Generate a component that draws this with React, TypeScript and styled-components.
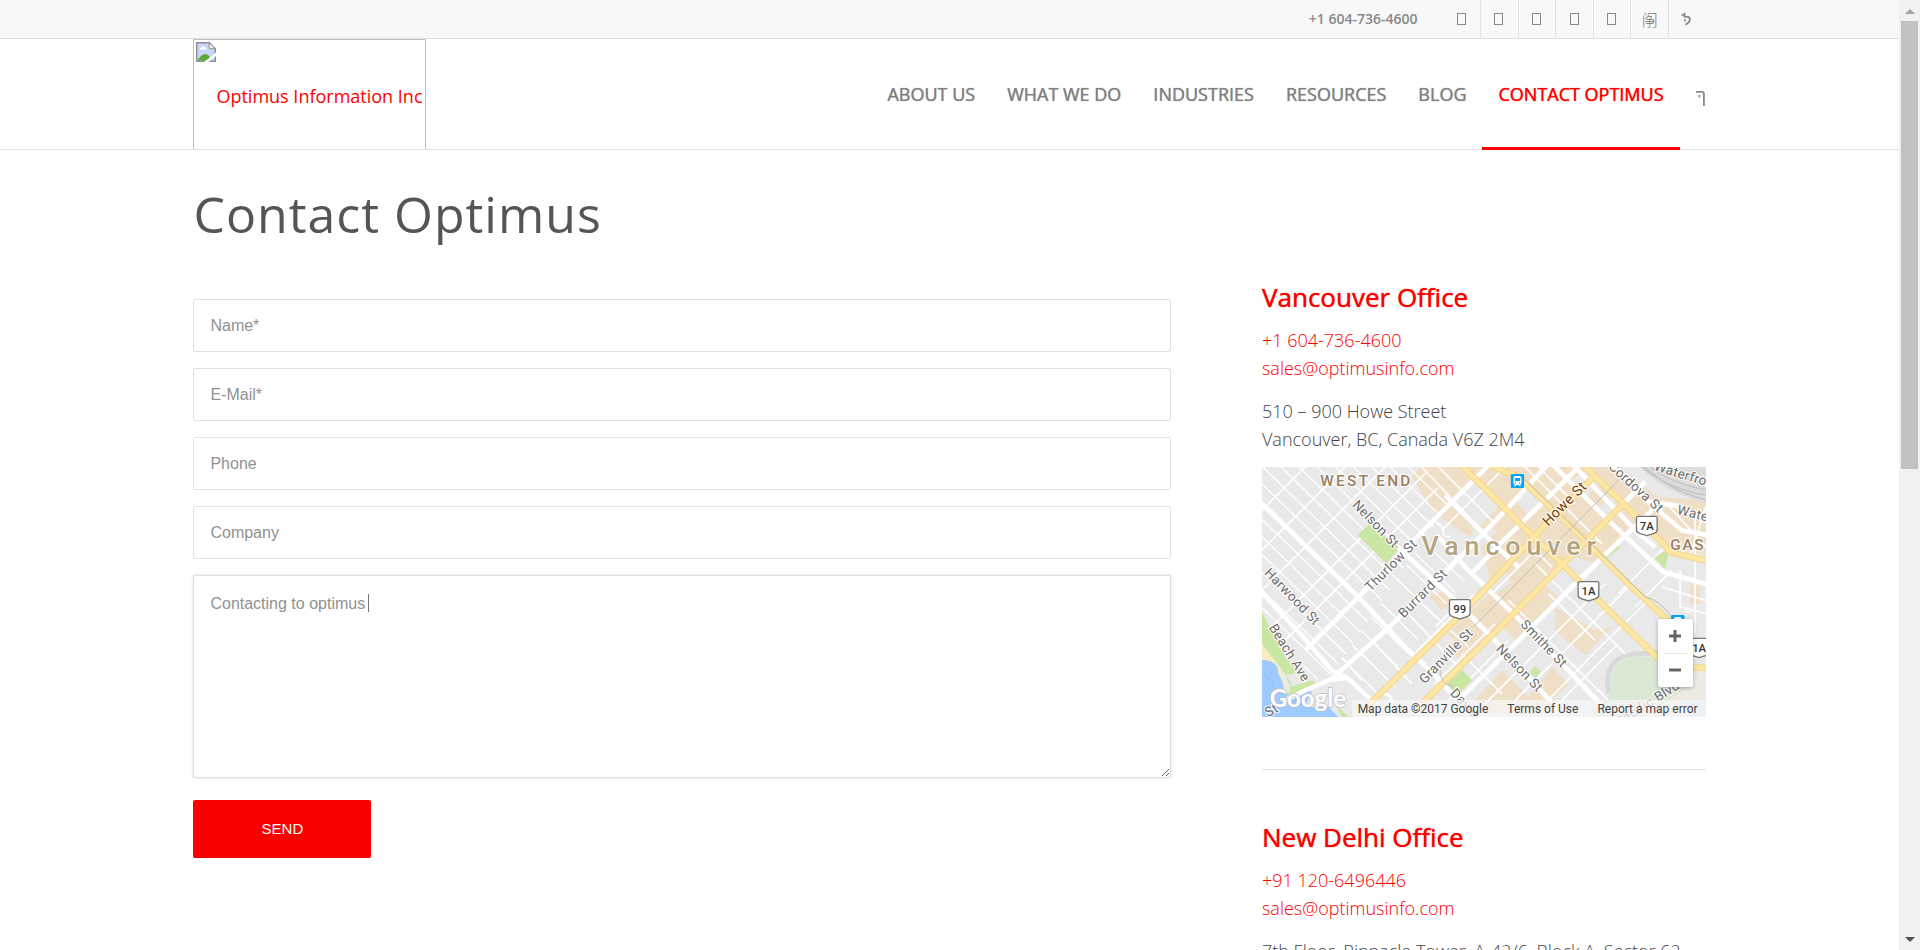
import React, { useState } from "react";
import styled, { createGlobalStyle } from "styled-components";

const red = "#fc0000";
const line = "#e1e1e1";
const sans = `"Open Sans", "Noto Sans", sans-serif`;
const arial = `"Liberation Sans", Arial, sans-serif`;

const GlobalStyle = createGlobalStyle`
  *, *::before, *::after { box-sizing: border-box; }
  body { margin: 0; background: #fff; color: #444; font: 300 18px/28px ${sans}; }
  a { color: inherit; text-decoration: none; }
  h1, h2, p, ul { margin: 0; padding: 0; }
  ul { list-style: none; }
`;

const Viewport = styled.div`
  display: flex;
  height: 100vh;
`;

const Page = styled.div`
  flex: 1;
  min-width: 0;
  overflow-y: auto;
  scrollbar-width: none;
`;

const Container = styled.div`
  width: 85%;
  margin: 0 auto;
  padding: 0 51px;
`;

const TopBar = styled.div`
  background: #f8f8f8;
  border-bottom: 1px solid ${line};
`;

const TopRow = styled(Container)`
  display: flex;
  justify-content: flex-end;
  align-items: center;
  height: 38px;
`;

const TopPhone = styled.span`
  color: #888;
  font-size: 14px;
  font-weight: 600;
  margin-right: 26px;
`;

const SocialList = styled.ul`
  display: flex;
  width: 262px;
  height: 38px;
`;

const SocialItem = styled.li`
  flex: 1;
  display: flex;
  border-right: 1px solid ${line};
  &:last-child { border-right: 0; }
`;

const SocialLink = styled.a`
  flex: 1;
  display: flex;
  align-items: center;
  justify-content: center;
  color: #777;
  font: 300 16px/20px "Noto Sans CJK SC", sans-serif;
`;

const Header = styled.header`
  border-bottom: 1px solid ${line};
`;

const HeaderRow = styled(Container)`
  display: flex;
  justify-content: space-between;
  height: 110px;
`;

const Logo = styled.a`
  display: flex;
  width: 233px;
  padding: 2px 1px 0 2px;
  border: 1px solid #bfbfbf;
  border-bottom: 0;
  color: ${red};
  font-weight: 400;
  line-height: 108px;
  white-space: nowrap;
`;

const NavList = styled.ul`
  display: flex;
  height: 111px;
`;

const NavLink = styled.a<{ $active?: boolean }>`
  display: block;
  height: 111px;
  padding: 0 16px;
  border-bottom: 3px solid ${(p) => (p.$active ? red : "transparent")};
  color: ${(p) => (p.$active ? red : "#808080")};
  font-weight: 400;
  line-height: 111px;
  text-shadow: 0 0 1px currentColor;
  white-space: nowrap;
`;

const SearchLink = styled.a`
  display: flex;
  align-items: center;
  height: 111px;
  padding: 8px 0 0 16px;
  color: #888;
`;

const Main = styled.main`
  padding: 30px 0 50px;
`;

const Title = styled.h1`
  margin-bottom: 32px;
  color: #555;
  font-size: 50px;
  font-weight: 400;
  line-height: 68px;
  letter-spacing: 1px;
`;

const Columns = styled.div`
  display: grid;
  grid-template-columns: repeat(3, minmax(0, 1fr));
  column-gap: 6%;
  align-items: start;
`;

const Form = styled.form`
  grid-column: span 2;
  display: flex;
  flex-direction: column;
  align-items: flex-start;
  gap: 16px;
  padding-top: 19px;
`;

const Field = styled.input`
  width: 100%;
  height: 53px;
  padding: 0 16px;
  border: 1px solid ${line};
  border-radius: 2px;
  outline: 0;
  color: #919191;
  font: 16px/20px ${arial};
  &::placeholder { color: #919191; opacity: 1; }
`;

const MessageBox = styled.div`
  position: relative;
  width: 100%;
`;

const Message = styled.textarea`
  display: block;
  width: 100%;
  height: 203px;
  padding: 15px 16px;
  border: 1px solid ${line};
  border-radius: 2px;
  outline: 0;
  box-shadow: 0 0 2px 1px rgba(0, 0, 0, 0.08);
  resize: vertical;
  color: #919191;
  font: 16px/26px ${arial};
`;

const Caret = styled.span`
  position: absolute;
  top: 19px;
  left: 175px;
  width: 1px;
  height: 18px;
  background: #777;
`;

const Send = styled.button`
  width: 178px;
  height: 58px;
  margin-top: 6px;
  border: 0;
  border-bottom: 1px solid #e30000;
  border-radius: 2px;
  background: ${red};
  color: #fff;
  font: 15px/20px ${arial};
`;

const Office = styled.section`
  & + & {
    margin-top: 52px;
    padding-top: 50px;
    border-top: 1px solid ${line};
  }
`;

const OfficeName = styled.h2`
  margin-bottom: 12px;
  color: ${red};
  font-size: 26px;
  font-weight: 400;
  line-height: 34px;
  text-shadow: 0 0 1px currentColor;
`;

const OfficeText = styled.p<{ $accent?: boolean }>`
  margin-bottom: ${(p) => (p.$accent ? 15 : 14)}px;
  color: ${(p) => (p.$accent ? red : "#444")};
  & > a { display: block; }
`;

const MapFrame = styled.div`
  position: relative;
  height: 250px;
  overflow: hidden;
  & > svg { display: block; width: 100%; height: 100%; }
`;

const MapCredits = styled.div`
  position: absolute;
  right: 0;
  bottom: 0;
  display: flex;
  gap: 19px;
  padding: 2px 8px 0 6px;
  background: rgba(245, 245, 245, 0.75);
  color: #444;
  font: 12px/15px Roboto, sans-serif;
  white-space: nowrap;
`;

const ZoomPanel = styled.div`
  position: absolute;
  right: 13px;
  bottom: 30px;
  display: flex;
  flex-direction: column;
  width: 35px;
  border-radius: 2px;
  background: #fff;
  box-shadow: 0 1px 4px rgba(0, 0, 0, 0.3);
`;

const ZoomButton = styled.button`
  display: flex;
  align-items: center;
  justify-content: center;
  height: 34px;
  padding: 0;
  border: 0;
  background: none;
`;

const ZoomRule = styled.div`
  height: 1px;
  margin: 0 6px -1px;
  background: #e6e6e6;
`;

const ScrollTrack = styled.div`
  display: flex;
  flex-direction: column;
  align-items: center;
  width: 21px;
  padding: 9px 0 8px;
  background: #f1f1f1;
`;

const ScrollThumb = styled.div`
  width: 17px;
  height: 48%;
  margin: 7px 0 auto;
  background: #c1c1c1;
`;

const BoxGlyph = () => (
  <svg width="10" height="14" viewBox="0 0 10 14" fill="none" stroke="#888">
    <rect x="0.5" y="1.5" width="8" height="11" />
  </svg>
);

const HookGlyph = () => (
  <svg width="12" height="15" viewBox="0 0 12 15" fill="none" stroke="#888" strokeWidth="1.8">
    <path d="M0.500 2.800h3M3.500 0.800v4h3.500Q8.800 5 8.800 7.400T4.500 12.800M4 7.200v2.200" />
  </svg>
);

const SearchGlyph = () => (
  <svg width="10" height="17" viewBox="0 0 10 17" fill="none" stroke="#888" strokeWidth="1.8">
    <path d="M0 1.900h5.600Q7.900 2 7.900 4v12M3.400 5v2.400" />
  </svg>
);

const BrokenImage = () => (
  <svg width="20" height="20" viewBox="0 0 20 20">
    <path d="M.7.7h12.6l6 6v12.6H.7z" fill="#c6d6f4" stroke="#8d8d8d" strokeWidth="1.4" />
    <path d="M13.2.7v6h6z" fill="#fff" stroke="#8d8d8d" />
    <path d="M3.5 7.5q.4-2 2.2-2 1.300-2.400 3.200-.2 1.800 0 1.500 2.200z" fill="#fff" />
    <path d="M1.500 18.600q3.500-6.600 8-6.600 3.600 0 6 6.600z" fill="#58ab35" />
    <path d="M8.200 20 20 10.400V14l-7.200 6z" fill="#fff" />
  </svg>
);

type Pt = [number, number];
const path = (pts: Pt[]) => "M" + pts.map((p) => p.join(" ")).join("L");

const highways: Pt[][] = [
  [[300, 735], [345, 690], [590, 450], [700, 335], [815, 210], [1000, 25]],
  [[470, 720], [690, 505], [905, 290], [1085, 110]],
  [[600, -5], [770, 165], [905, 295], [1050, 440], [1190, 575], [1240, 600], [1340, 603]],
  [[690, -5], [730, 15], [765, 25], [930, 180], [1010, 260], [1120, 370], [1230, 470]],
  [[965, -5], [1085, 110], [1190, 215], [1225, 255], [1340, 283]],
];

const streets: Pt[][] = [
  [[130, 550], [290, 390], [450, 225], [570, 105], [690, -15]],
  [[210, 635], [375, 487], [510, 355], [640, 225], [750, 110], [860, -10]],
  [[465, 560], [640, 385]],
  [[630, 320], [700, 245], [880, 70], [950, 0]],
  [[590, 700], [770, 520], [960, 330], [1160, 140], [1190, 110]],
  [[1085, 110], [1150, 45]],
  [[-10, 100], [290, 390], [430, 540], [545, 650], [620, 740]],
  [[-10, 365], [120, 505], [210, 610], [260, 635], [350, 720]],
  [[70, 700], [130, 670], [205, 638], [260, 632]],
  [[410, 240], [440, 270], [560, 380], [690, 510], [900, 740]],
  [[530, 210], [620, 310], [760, 445], [900, 590], [1020, 715]],
  [[550, 85], [700, 235], [770, 300]],
  [[870, -10], [1050, 170], [1205, 315], [1340, 353]],
  [[930, -10], [1130, 200], [1180, 240]],
  [[1050, -10], [1160, 105], [1260, 190], [1340, 205]],
  [[1165, 105], [1240, 115], [1340, 165]],
];

const lanes: Pt[][] = [
  [[520, 650], [700, 470]], [[560, 700], [740, 520]], [[520, 480], [570, 430]],
  [[640, 740], [850, 530], [1030, 350]], [[720, 740], [930, 530], [1110, 350]],
  [[820, 740], [1010, 545], [1150, 410]], [[880, 720], [1070, 530]],
  [[600, 560], [720, 680]], [[740, 400], [860, 520], [1040, 700]], [[820, 290], [960, 430], [1090, 560]],
  [[690, 380], [820, 250], [870, 300]], [[860, 380], [1000, 520]],
  [[540, 190], [700, 30], [730, 0]], [[480, 0], [660, 190]], [[530, 0], [700, 170]],
  [[700, 90], [800, 190]], [[790, 0], [1020, 230]], [[830, 0], [940, 110]],
  [[960, 340], [1110, 190]], [[1070, 380], [1210, 240]], [[1120, 420], [1230, 310]],
  [[1280, 280], [1332, 120]], [[1215, 110], [1332, 240]], [[1255, 310], [1255, 420], [1332, 440]],
  [[1300, 140], [1300, 500]], [[1200, 360], [1332, 400]], [[240, 570], [300, 640]],
  [[430, 430], [580, 590]], [[470, 400], [620, 540]], [[330, 520], [450, 650]], [[300, 560], [400, 660]],
];

const downtown: Pt[][] = [
  [[450, 30], [480, -5], [680, -5], [560, 110], [640, 180], [625, 210], [520, 140]],
  [[650, 180], [770, 60], [860, -5], [1060, -5], [1190, 90], [1332, 100], [1332, 265], [1210, 240], [1130, 160], [1000, 290], [940, 270], [600, 550], [560, 500], [690, 370], [660, 240], [710, 190]],
  [[640, -5], [850, -5], [720, 120], [650, 60]],
  [[500, 385], [560, 370], [580, 400], [540, 430]],
  [[580, 560], [820, 330], [900, 400], [760, 520], [720, 480], [600, 590]],
  [[880, 420], [1000, 490], [1050, 480], [970, 565], [880, 490]],
  [[640, 700], [720, 610], [800, 690], [870, 600], [920, 650], [830, 740], [660, 740]],
  [[1285, 355], [1315, 355], [1315, 410], [1285, 410]],
];

const grey: Pt[][] = [
  [[760, 100], [800, 70], [840, 110], [800, 145]],
  [[930, 40], [970, 10], [1010, 50], [975, 90]],
  [[690, 350], [730, 320], [750, 345], [705, 380]],
  [[1010, 120], [1050, 90], [1080, 130], [1030, 180]],
];

const greens: Pt[][] = [
  [[322, 172], [412, 240], [375, 290], [288, 205]],
  [[1062, 230], [1075, 243], [1036, 272], [1027, 265]],
  [[1222, 245], [1210, 306], [1177, 272]],
  [[600, 608], [632, 640], [588, 682], [555, 652]],
  [[818, 598], [838, 612], [822, 632], [803, 618]],
  [[0, 435], [50, 530], [80, 580], [110, 615], [72, 625], [85, 660], [150, 640], [172, 655], [75, 692], [90, 650], [55, 600], [0, 530]],
  [[222, 715], [262, 750], [240, 750]],
];

interface MapLabel { x: number; y: number; r: number; t: string; s?: number; c?: string; w?: number; ls?: number }
const labels: MapLabel[] = [
  { x: 314, y: 57, r: 0, t: "WEST END", s: 46, c: "#9a8062", w: 500, ls: 7 },
  { x: 750, y: 265, r: 0, t: "Vancouver", s: 80, c: "#b3a582", w: 500, ls: 18 },
  { x: 1278, y: 248, r: 0, t: "GAS", s: 46, c: "#9a8062", w: 500, ls: 5 },
  { x: 337, y: 176, r: 46, t: "Nelson St" },
  { x: 393, y: 300, r: -45, t: "Thurlow St" },
  { x: 488, y: 384, r: -45, t: "Burrard St" },
  { x: 86, y: 394, r: 46, t: "Harwood St" },
  { x: 77, y: 561, r: 58, t: "Beach Ave" },
  { x: 558, y: 572, r: -46, t: "Granville St" },
  { x: 768, y: 608, r: 46, t: "Nelson St" },
  { x: 841, y: 535, r: 46, t: "Smithe St" },
  { x: 914, y: 116, r: -45, t: "Howe St", s: 43, c: "#7a4010" },
  { x: 1118, y: 66, r: 42, t: "Cordova St" },
  { x: 1299, y: 148, r: 14, t: "Water" },
  { x: 1290, y: 38, r: 17, t: "Waterfront R" },
  { x: 603, y: 713, r: 46, t: "Davie" },
  { x: 1160, y: 716, r: -32, t: "Pacific Blvd" },
  { x: 32, y: 736, r: -28, t: "St" },
];

const Shield = ({ x, y, t }: { x: number; y: number; t: string }) => (
  <g transform={`translate(${x} ${y})`}>
    <path d="M-26-28H26Q32-28 31-20V12Q31 20 22 23L0 30L-22 23Q-31 20-31 12V-20Q-31-28-26-28Z" fill="#fff" stroke="#777" strokeWidth="4" />
    <text y="12" fontSize="34" fontWeight="500" fill="#333" textAnchor="middle">{t}</text>
  </g>
);

const Station = ({ x, y }: { x: number; y: number }) => (
  <g transform={`translate(${x} ${y})`}>
    <rect width="40" height="42" rx="4" fill="#00a5f5" />
    <path d="M8 12q0-6 6-6h12q6 0 6 6v16q0 4-5 4l4 5h-5l-4-5h-4l-4 5H9l4-5q-5 0-5-4z" fill="#fff" />
    <path d="M12 12h16v9H12z" fill="#00a5f5" />
    <circle cx="14" cy="27" r="2" fill="#00a5f5" />
    <circle cx="26" cy="27" r="2" fill="#00a5f5" />
  </g>
);

const CityMap = () => (
  <svg viewBox="0 0 1332 750" preserveAspectRatio="xMidYMid slice" fontFamily="Roboto, sans-serif" role="img" aria-label="Map">
    <defs>
      <clipPath id="westEnd">
        <path d="M0 0H480L560 110L205 630L160 640L0 440Z" />
      </clipPath>
      <clipPath id="south">
        <path d="M205 630L560 110L690 240L330 700L280 700Z" />
      </clipPath>
    </defs>
    <rect width="1332" height="750" fill="#e9e9e9" />
    {downtown.map((p, i) => <path key={i} d={path(p) + "Z"} fill="#f0dfc7" />)}
    {grey.map((p, i) => <path key={i} d={path(p) + "Z"} fill="#e9e9e9" />)}
    <path d="M1130-5Q1200 70 1332 110V-5Z" fill="#dcdcdc" />
    <path d="M1140 0Q1220 65 1332 85M1165 0Q1230 50 1332 68M1195 0Q1250 35 1332 50M1150 0Q1230 75 1332 98" fill="none" stroke="#c4c4c4" strokeWidth="4" />
    <path d="M1190 600H1332V750H1150Z" fill="#eeebe4" />
    <path d="M1275 700H1332V750H1275Z" fill="#cfe0fb" />
    <path d="M1040 680Q1020 560 1140 560H1200" fill="none" stroke="#d9d9d9" strokeWidth="14" />
    <path d="M985 750L1045 680Q1040 570 1130 570H1190V640L1290 650L1150 750Z" fill="#dae8d3" />
    <g fill="none" stroke="#fff" strokeLinejoin="round">
      <g clipPath="url(#westEnd)" strokeWidth="4">
        {Array.from({ length: 20 }, (_, i) => {
          const d = -480 + i * 53;
          return <path key={i} d={`M0 ${d}L700 ${d + 680}`} />;
        })}
        {[130, 250, 370, 510, 590].map((d) => (
          <path key={d} d={`M0 ${d}L600 ${d - 600}`} strokeWidth="5" />
        ))}
      </g>
      <g clipPath="url(#south)" strokeWidth="4">
        {[-250, -190, -130, -60, 60, 130, 200, 270, 340].map((d) => (
          <path key={d} d={`M0 ${d}L800 ${d + 780}`} />
        ))}
      </g>
      {lanes.map((p, i) => <path key={i} d={path(p)} strokeWidth="5" />)}
    </g>
    <path d="M0 520L55 605L80 690L0 750Z" fill="#f7ecc4" />
    <path d="M0 578Q50 580 50 620Q68 650 68 680L150 672L130 720H200L230 750H0Z" fill="#9ecbff" />
    <path d="M0 620l30 20 15 40M40 600l-20 30M90 690l40 30" stroke="#8bbbf0" strokeWidth="2" fill="none" />
    {greens.map((p, i) => <path key={i} d={path(p) + "Z"} fill="#c9e6a2" />)}
    <g fill="none" stroke="#fff" strokeLinejoin="round">
      {streets.map((p, i) => <path key={i} d={path(p)} strokeWidth="14" />)}
      <path d="M522 165Q550 180 545 205Q560 215 570 205" strokeWidth="5" />
    </g>
    <circle cx="368" cy="702" r="22" fill="none" stroke="#fff" strokeWidth="9" />
    <circle cx="1279" cy="430" r="7" fill="none" stroke="#fff" strokeWidth="4" />
    <g fill="none" strokeLinejoin="round">
      {highways.map((p, i) => <path key={i} d={path(p)} stroke="#f3d890" strokeWidth="20" />)}
      {highways.map((p, i) => <path key={i} d={path(p)} stroke="#fee6a4" strokeWidth="13" />)}
      <path d="M635 480L1085 25M790 40L930 175L1150 390Q1190 395 1230 450M535 600Q530 650 575 660" stroke="#bdbdbd" strokeWidth="3" />
    </g>
    {labels.map((l, i) => (
      <text
        key={i}
        transform={`translate(${l.x} ${l.y}) rotate(${l.r})`}
        y={l.r ? 6 : 0}
        textAnchor="middle"
        fontSize={l.s ?? 40}
        fontWeight={l.w ?? 400}
        letterSpacing={l.ls ?? 1}
        fill={l.c ?? "#6b6b6b"}
        stroke="#fff"
        strokeOpacity="0.8"
        strokeWidth="7"
        paintOrder="stroke"
      >
        {l.t}
      </text>
    ))}
    <Shield x={594} y={426} t="99" />
    <Shield x={980} y={372} t="1A" />
    <Shield x={1155} y={176} t="7A" />
    <Shield x={1312} y={542} t="1A" />
    <Station x={747} y={21} />
    <Station x={1228} y={444} />
    <text x="24" y="720" fontFamily="Lato, sans-serif" fontSize="72" fontWeight="700" fill="#fff" stroke="#bdbdbd" strokeWidth="4" paintOrder="stroke">Google</text>
  </svg>
);

const navItems = ["ABOUT US", "WHAT WE DO", "INDUSTRIES", "RESOURCES", "BLOG", "CONTACT OPTIMUS"];

const social = [
  { name: "LinkedIn", icon: <BoxGlyph /> },
  { name: "Twitter", icon: <BoxGlyph /> },
  { name: "Facebook", icon: <BoxGlyph /> },
  { name: "Google Plus", icon: <BoxGlyph /> },
  { name: "YouTube", icon: <BoxGlyph /> },
  { name: "RSS", icon: "䦶" },
  { name: "Mail", icon: <HookGlyph /> },
];

export default function App() {
  const [message, setMessage] = useState("Contacting to optimus");
  return (
    <Viewport>
      <GlobalStyle />
      <Page>
        <TopBar>
          <TopRow>
            <TopPhone>+1 604-736-4600</TopPhone>
            <SocialList>
              {social.map((s) => (
                <SocialItem key={s.name}>
                  <SocialLink href="#" aria-label={s.name}>{s.icon}</SocialLink>
                </SocialItem>
              ))}
            </SocialList>
          </TopRow>
        </TopBar>
        <Header>
          <HeaderRow>
            <Logo href="#">
              <BrokenImage />
              <span>Optimus Information Inc</span>
            </Logo>
            <nav>
              <NavList>
                {navItems.map((n) => (
                  <li key={n}>
                    <NavLink href="#" $active={n === "CONTACT OPTIMUS"}>{n}</NavLink>
                  </li>
                ))}
                <li>
                  <SearchLink href="#" aria-label="Search"><SearchGlyph /></SearchLink>
                </li>
              </NavList>
            </nav>
          </HeaderRow>
        </Header>
        <Main>
          <Container>
            <Title>Contact Optimus</Title>
            <Columns>
              <Form onSubmit={(e) => e.preventDefault()}>
                <Field aria-label="Name" placeholder="Name*" />
                <Field aria-label="E-Mail" type="email" placeholder="E-Mail*" />
                <Field aria-label="Phone" type="tel" placeholder="Phone" />
                <Field aria-label="Company" placeholder="Company" />
                <MessageBox>
                  <Message aria-label="Message" value={message} onChange={(e) => setMessage(e.target.value)} />
                  <Caret />
                </MessageBox>
                <Send type="submit">SEND</Send>
              </Form>
              <aside>
                <Office>
                  <OfficeName>Vancouver Office</OfficeName>
                  <OfficeText $accent>
                    <a href="tel:+16047364600">+1 604-736-4600</a>
                    <a href="mailto:sales@optimusinfo.com">sales@optimusinfo.com</a>
                  </OfficeText>
                  <OfficeText>
                    510 – 900 Howe Street
                    <br />
                    Vancouver, BC, Canada V6Z 2M4
                  </OfficeText>
                  <MapFrame>
                    <CityMap />
                    <ZoomPanel>
                      <ZoomButton aria-label="Zoom in">
                        <svg width="14" height="14" viewBox="0 0 14 14"><path d="M7 1v12M1 7h12" stroke="#666" strokeWidth="3" /></svg>
                      </ZoomButton>
                      <ZoomRule />
                      <ZoomButton aria-label="Zoom out">
                        <svg width="14" height="14" viewBox="0 0 14 14"><path d="M1 7h12" stroke="#666" strokeWidth="3" /></svg>
                      </ZoomButton>
                    </ZoomPanel>
                    <MapCredits>
                      <span>Map data ©2017 Google</span>
                      <a href="#">Terms of Use</a>
                      <a href="#">Report a map error</a>
                    </MapCredits>
                  </MapFrame>
                </Office>
                <Office>
                  <OfficeName>New Delhi Office</OfficeName>
                  <OfficeText $accent>
                    <a href="tel:+911206496446">+91 120-6496446</a>
                    <a href="mailto:sales@optimusinfo.com">sales@optimusinfo.com</a>
                  </OfficeText>
                  <OfficeText>7th Floor, Pinnacle Tower, A-42/6, Block A, Sector 62</OfficeText>
                </Office>
              </aside>
            </Columns>
          </Container>
        </Main>
      </Page>
      <ScrollTrack aria-hidden="true">
        <svg width="10" height="5" viewBox="0 0 10 5"><path d="M0 5L5 0L10 5Z" fill="#a3a3a3" /></svg>
        <ScrollThumb />
        <svg width="10" height="5" viewBox="0 0 10 5"><path d="M0 0L5 5L10 0Z" fill="#505050" /></svg>
      </ScrollTrack>
    </Viewport>
  );
}
